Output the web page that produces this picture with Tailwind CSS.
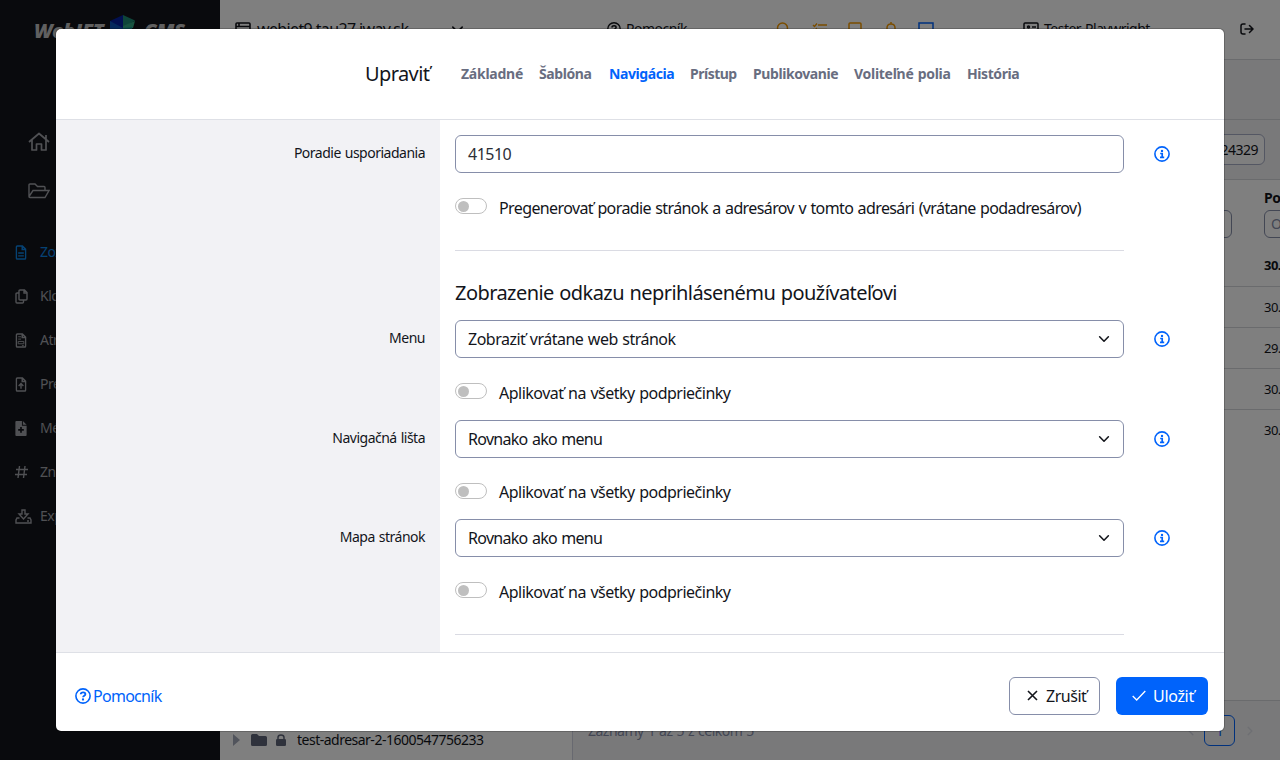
<!DOCTYPE html>
<html lang="sk">
<head>
<meta charset="utf-8">
<title>WebJET CMS</title>
<script src="https://cdn.jsdelivr.net/npm/@tailwindcss/browser@4"></script>
</head>
<body class="relative h-[760px] w-[1280px] overflow-hidden bg-white font-['Noto_Sans',sans-serif] text-[14px] tracking-[-0.036em] [word-spacing:0.06em] whitespace-nowrap text-[#13151b]">
<svg class="hidden">
  <symbol id="info" viewBox="0 0 16 16"><circle cx="8" cy="8" r="7.1" fill="none" stroke="currentColor" stroke-width="1.6"/><circle cx="8" cy="4.900" r="1.200" fill="currentColor"/><path d="M6.200 7.500h2v4M6 11.300h4.200" fill="none" stroke="currentColor" stroke-width="1.700"/></symbol>
  <symbol id="question" viewBox="0 0 16 16"><circle cx="8" cy="8" r="7.1" fill="none" stroke="currentColor" stroke-width="1.6"/><path d="M5.700 6.300c.2-2.600 4.700-2.600 4.700 0 0 1.500-2.300 1.600-2.300 3" fill="none" stroke="currentColor" stroke-width="1.800"/><circle cx="8" cy="11.500" r="1.150" fill="currentColor"/></symbol>
  <symbol id="chev" viewBox="0 0 16 16"><path d="m3 5.500 5 5 5-5" fill="none" stroke="currentColor" stroke-width="1.800" stroke-linecap="round" stroke-linejoin="round"/></symbol>
  <symbol id="file" viewBox="0 0 12 16"><path d="M1 2.200Q1 1 2.200 1H7.500L11 4.500v9.300q0 1.200-1.200 1.200H2.200Q1 15 1 13.800zM7.300 1v3.700H11" fill="none" stroke="currentColor" stroke-width="1.600"/></symbol>
</svg>

<div class="flex h-full">
  <aside class="flex w-[220px] shrink-0 flex-col bg-[#13151b] text-[#a0a2a8]">
    <div class="flex h-[117px] items-start pt-[14px] pl-[34px] text-[20px] leading-[33px] font-black text-[#c0c0c0] italic">
      <span class="w-[76px] tracking-[-0.02em]">WebJET</span>
      <svg class="h-7 w-[25px]" viewBox="0 0 25 28"><path d="M0 7 13 1v13L0 22z" fill="#0420a0"/><path d="m13 1 12 5.500L13 14z" fill="#1d8b73"/><path d="m25 7-2 7-10 1v-3z" fill="#31a882"/><path d="m0 7 13 7v13L0 21z" fill="#0b52b8"/><path d="m13 14 9-1v9l-9 5z" fill="#128f8d"/></svg>
      <span class="pl-[9px] tracking-[-0.02em]">CMS</span>
    </div>
    <div class="flex h-[49px] items-center pl-[28px]"><svg class="h-5 w-[22px]" viewBox="0 0 22 20" fill="none" stroke="currentColor" stroke-width="1.700" stroke-linejoin="round"><path d="m1 10 10-8.500L21 10M4 8v10h4.500v-6h5v6H18V8M18 7V3"/></svg></div>
    <div class="flex h-[48px] items-center pt-[2px] pl-[28px]"><svg class="h-4 w-[22px]" viewBox="0 0 22 16" fill="none" stroke="currentColor" stroke-width="1.400"><path d="M1 13V2q0-1 1-1h5l2.500 2.500H16q1 0 1 1V7M1 13.500 5 7.500h16l-4 7H2q-1 0-1-1z"/></svg></div>
    <nav class="flex flex-col pt-[16px] pl-[15px] [&>div]:flex [&>div]:h-[44px] [&>div]:items-center [&>div>span]:-mt-px">
      <div class="text-[#0b84e8]"><svg class="mr-[13px] h-[15px] w-3" viewBox="0 0 12 16"><use href="#file"/><path d="M3 8.500h6M3 11.500h6" stroke="currentColor" stroke-width="1.400"/></svg><span>Zoznam</span></div>
      <div><svg class="mr-3 h-[15px] w-[13px]" viewBox="0 0 13 15" fill="none" stroke="currentColor" stroke-width="1.400"><path d="M5 1h4.500L12 3.500V10q0 1-1 1H5q-1 0-1-1V2q0-1 1-1zM9 1v3h3M4 4H2Q1 4 1 5v8q0 1 1 1h5.500q1 0 1-1v-2"/></svg><span>Klonovanie</span></div>
      <div><svg class="mr-[13px] h-[15px] w-3" viewBox="0 0 12 16"><use href="#file"/><path d="M3 4h3M3 6.500h3M3 9h6v2.500H3zM7 13.500h2" fill="none" stroke="currentColor"/></svg><span>Atribúty</span></div>
      <div><svg class="mr-[13px] h-[15px] w-3" viewBox="0 0 12 16"><use href="#file"/><path d="M6 12.500V7.500M3.500 9.500 6 7l2.500 2.500" fill="none" stroke="currentColor" stroke-width="1.500"/></svg><span>Presmerovania</span></div>
      <div><svg class="mr-[13px] h-[15px] w-3" viewBox="0 0 12 16"><path d="M0 1q0-1 1-1h6v5h5v10q0 1-1 1H1q-1 0-1-1zM8 0l4 4H8z" fill="currentColor"/><path d="M6 6.500v6M3 9.500h6" stroke="#13151b" stroke-width="1.800"/></svg><span>Médiá</span></div>
      <div><svg class="mr-3 h-[14px] w-[13px]" viewBox="0 0 13 14"><path d="M4.500 1 3 13M10 1 8.500 13M1 4.500h12M0 9.500h12" fill="none" stroke="currentColor" stroke-width="1.400"/></svg><span>Značky</span></div>
      <div><svg class="mr-2 h-[15px] w-[17px]" viewBox="0 0 17 15" fill="none" stroke="currentColor" stroke-width="1.400"><path d="M7 1h3v4h3l-4.500 5L4 5h3zM4.500 9H2l-1 2v3h15v-3l-1-2h-2.500M12 12h2"/></svg><span>Export</span></div>
    </nav>
  </aside>

  <div class="flex w-[1060px] shrink-0 flex-col overflow-hidden">
    <header class="flex h-[60px] shrink-0 items-center border-b border-[#d5d6da] pb-[2px]">
      <svg class="ml-[15px] h-[14px] w-4" viewBox="0 0 16 14" fill="none" stroke="currentColor" stroke-width="1.600"><rect x="1" y="1" width="14" height="12" rx="1"/><path d="M1 4.500h14M4 1v3"/></svg>
      <span class="ml-[6px] w-[193px] pt-px text-[16px] tracking-[-0.04em]">webjet9.tau27.iway.sk</span>
      <svg class="mt-[3px] h-4 w-4"><use href="#chev" width="15" height="15"/></svg>
      <svg class="ml-[141px] h-[14px] w-[14px]"><use href="#question" width="14" height="14"/></svg>
      <span class="ml-[5px] w-[150px]">Pomocník</span>
      <div class="flex w-[247px] items-center text-[#f59a00]">
        <svg class="h-[14px] w-[14px]" viewBox="0 0 14 14" fill="none" stroke="currentColor" stroke-width="1.500"><circle cx="6.500" cy="6" r="5"/><path d="m10 10 4 4"/></svg>
        <svg class="ml-[22px] h-[14px] w-4" viewBox="0 0 16 14" fill="none" stroke="currentColor" stroke-width="1.400"><path d="m1 3 1.500 1.500L5 1.500M6 3h9M1 7l1.500 1.500L5 6M6 7.500h9M6 12h9"/></svg>
        <svg class="ml-5 h-[14px] w-[14px]" viewBox="0 0 14 14" fill="none" stroke="currentColor" stroke-width="1.500"><rect x="1" y="1" width="12" height="12" rx="1"/></svg>
        <svg class="ml-[23px] h-[14px] w-3" viewBox="0 0 12 14" fill="none" stroke="currentColor" stroke-width="1.500"><path d="M6 0v2M2 10V6q0-4 4-4t4 4v4l1 1H1z"/></svg>
        <svg class="ml-[21px] h-[14px] w-4 text-[#0063fb]" viewBox="0 0 16 14" fill="none" stroke="currentColor" stroke-width="1.500"><rect x="1" y="1" width="14" height="12"/></svg>
      </div>
      <svg class="h-[14px] w-4" viewBox="0 0 16 14" fill="none" stroke="currentColor" stroke-width="1.500"><rect x="1" y="1" width="14" height="12" rx="1"/><path d="M3.500 10q2-3 4 0M9 5h4M9 8h4"/><circle cx="5.500" cy="5" r="1"/></svg>
      <span class="ml-[5px] w-[196px]">Tester Playwright</span>
      <svg class="h-[12px] w-[14px]" viewBox="0 0 14 12" fill="none" stroke="currentColor" stroke-width="1.500" stroke-linecap="round"><path d="M5 1H3Q1 1 1 3v6q0 2 2 2h2M5 6h8M9.500 2.500 13 6 9.500 9.500"/></svg>
    </header>
    <div class="h-[60px] shrink-0 border-b border-[#d5d6da] bg-[#f3f3f5]"></div>
    <div class="flex grow">
      <div class="flex w-[353px] shrink-0 flex-col justify-end border-r border-[#d0d3e0] pb-[9px]">
        <div class="flex h-[22px] items-center pl-[13px] text-[#5f6579]">
          <svg class="h-[12px] w-[7px]" viewBox="0 0 7 12"><path d="M0 0 7 6 0 12z" fill="#a3a8b8"/></svg>
          <svg class="ml-[11px] h-3 w-4" viewBox="0 0 16 12"><path d="M0 1.500Q0 0 1.500 0H6l2 2h6.500Q16 2 16 3.500v7q0 1.500-1.500 1.500h-13Q0 12 0 10.500z" fill="currentColor"/></svg>
          <svg class="ml-[9px] h-3 w-[10px]" viewBox="0 0 10 12"><rect y="5" width="10" height="7" rx="1.300" fill="currentColor"/><path d="M2 6V3.500q0-2.500 3-2.500t3 2.500V6" fill="none" stroke="currentColor" stroke-width="1.500"/></svg>
          <span class="-mt-px ml-[11px] text-[#13151b]">test-adresar-2-1600547756233</span>
        </div>
      </div>
      <div class="flex w-[707px] shrink-0 flex-col overflow-hidden">
        <div class="flex h-[60px] shrink-0 justify-end border-b border-[#d5d6da] bg-[#f3f3f5] pt-[14px] pr-[15px]"><div class="flex h-[31px] w-[90px] items-center justify-end rounded-md border border-[#a9aec6] bg-white pr-[6px]">24329</div></div>
        <div class="flex justify-end">
          <div class="mt-[30px] mr-[32px] h-[28px] w-[90px] rounded-md border border-[#868ea9]"></div>
          <div class="w-[16px] pt-2"><b class="block h-[22px] leading-[19px]">Posledná zmena</b><div class="h-[28px] w-[100px] rounded-md border border-[#868ea9] pl-[6px] leading-[26px] text-[#868ea9]">Od</div></div>
        </div>
        <div class="mt-[7px] flex flex-col">
          <div class="h-[42px] border-b border-[#d5d6da] pl-[691px] text-[13px] leading-[41px] font-bold">30.08.2023</div>
          <div class="h-[41px] border-b border-[#d5d6da] pl-[691px] text-[13px] leading-[40px]">30.08.2023</div>
          <div class="h-[41px] border-b border-[#d5d6da] pl-[691px] text-[13px] leading-[40px]">29.08.2023</div>
          <div class="h-[41px] border-b border-[#d5d6da] pl-[691px] text-[13px] leading-[40px]">30.08.2023</div>
          <div class="h-[41px] pl-[691px] text-[13px] leading-[40px]">30.08.2023</div>
        </div>
        <div class="mt-auto flex h-[60px] items-center border-t border-[#d5d6da] bg-[#f3f3f5] pl-[15px] text-[#868ea9]">
          <span class="w-[597px]">Záznamy 1 až 5 z celkom 5</span>
          <svg class="h-3 w-3 rotate-90 text-[#d0d3e0]"><use href="#chev" width="12" height="12"/></svg>
          <span class="ml-[7px] flex h-[31px] w-[31px] shrink-0 items-center justify-center rounded-md border border-[#0063fb] text-[#0063fb]">1</span>
          <svg class="ml-[9px] h-3 w-3 -rotate-90 text-[#dcdee6]"><use href="#chev" width="12" height="12"/></svg>
        </div>
      </div>
    </div>
  </div>
</div>

<div class="absolute inset-0 bg-black/50"></div>

<div class="absolute top-[29px] left-[56px] flex h-[702px] w-[1168px] flex-col overflow-hidden rounded-[5px] bg-white shadow-[0_0_0_1px_rgba(0,0,0,0.2)]">
  <div class="flex h-[91px] shrink-0 items-center border-b border-[#dee0e6] pl-[309px]">
    <h5 class="w-[96px] text-[20px] tracking-[-0.03em]">Upraviť</h5>
    <nav class="-mt-[2px] flex text-[14px] font-bold tracking-[-0.03em] text-[#686d80]">
      <span class="w-[78px] tracking-[-0.018em]">Základné</span><span class="w-[70px]">Šablóna</span><span class="w-[81px] text-[#0063fb]">Navigácia</span><span class="w-[63px] tracking-[-0.036em]">Prístup</span><span class="w-[101px]">Publikovanie</span><span class="w-[113px] tracking-[-0.02em]">Voliteľné polia</span><span>História</span>
    </nav>
  </div>
  <div class="grid h-[532px] shrink-0 grid-cols-[384px_669px_76px] gap-x-[15px] overflow-hidden bg-[linear-gradient(to_right,#f2f2f5_384px,#fff_384px)] text-[16px]">
    <div class="flex flex-col items-end pr-[15px] text-[14px] leading-[20px]">
      <span class="mt-[23px]">Poradie usporiadania</span>
      <span class="mt-[165px]">Menu</span>
      <span class="mt-[80px]">Navigačná lišta</span>
      <span class="mt-[79px]">Mapa stránok</span>
    </div>
    <div class="flex flex-col pt-[15px]">
      <div class="flex h-[38px] items-center rounded-md border border-[#868ea9] px-[12px] text-[#2b2e36]">41510</div>
      <div class="mt-[25px] flex"><i class="flex h-4 w-8 items-center rounded-full border border-[#bfbfbf] pl-[2px]"><i class="size-[11px] rounded-full bg-[#bfbfbf]"></i></i><span class="ml-3 h-4 pt-[2px] leading-[16px] tracking-[-0.038em]">Pregenerovať poradie stránok a adresárov v tomto adresári (vrátane podadresárov)</span></div>
      <hr class="mt-[36px] border-[#dadbe3]">
      <h5 class="mt-[27px] h-[30px] text-[20px] leading-[30px] tracking-[-0.028em]">Zobrazenie odkazu neprihlásenému používateľovi</h5>
      <div class="mt-[12px] flex h-[38px] items-center justify-between rounded-md border border-[#868ea9] px-[12px]"><span>Zobraziť vrátane web stránok</span><svg class="size-[14px]"><use href="#chev" width="14" height="14"/></svg></div>
      <div class="mt-[25px] flex"><i class="flex h-4 w-8 items-center rounded-full border border-[#bfbfbf] pl-[2px]"><i class="size-[11px] rounded-full bg-[#bfbfbf]"></i></i><span class="ml-3 h-4 pt-[2px] leading-[16px]">Aplikovať na všetky podpriečinky</span></div>
      <div class="mt-[21px] flex h-[38px] items-center justify-between rounded-md border border-[#868ea9] px-[12px]"><span class="tracking-[-0.044em]">Rovnako ako menu</span><svg class="size-[14px]"><use href="#chev" width="14" height="14"/></svg></div>
      <div class="mt-[25px] flex"><i class="flex h-4 w-8 items-center rounded-full border border-[#bfbfbf] pl-[2px]"><i class="size-[11px] rounded-full bg-[#bfbfbf]"></i></i><span class="ml-3 h-4 pt-px leading-[16px]">Aplikovať na všetky podpriečinky</span></div>
      <div class="mt-[20px] flex h-[38px] items-center justify-between rounded-md border border-[#868ea9] px-[12px]"><span class="tracking-[-0.044em]">Rovnako ako menu</span><svg class="size-[14px]"><use href="#chev" width="14" height="14"/></svg></div>
      <div class="mt-[25px] flex"><i class="flex h-4 w-8 items-center rounded-full border border-[#bfbfbf] pl-[2px]"><i class="size-[11px] rounded-full bg-[#bfbfbf]"></i></i><span class="ml-3 h-4 pt-[2px] leading-[16px]">Aplikovať na všetky podpriečinky</span></div>
      <hr class="mt-[36px] border-[#dadbe3]">
    </div>
    <div class="flex flex-col pl-[15px] text-[#0063fb]">
      <svg class="mt-[26px] size-4"><use href="#info"/></svg>
      <svg class="mt-[169px] size-4"><use href="#info"/></svg>
      <svg class="mt-[84px] size-4"><use href="#info"/></svg>
      <svg class="mt-[83px] size-4"><use href="#info"/></svg>
    </div>
  </div>
  <div class="flex grow items-center border-t border-[#dee0e6] pt-[7px] pr-4 pb-0 pl-[19px] text-[16px]">
    <a class="flex items-center gap-[2px] tracking-[-0.045em] text-[#0063fb]"><svg class="size-4"><use href="#question"/></svg>Pomocník</a>
    <button class="ml-auto flex h-[38px] w-[91px] items-center rounded-md border border-[#868ea9] pl-[17px] tracking-[-0.03em]"><svg class="mr-2 size-[11px]" viewBox="0 0 11 11"><path d="m1 1 9 9M10 1l-9 9" stroke="currentColor" stroke-width="1.600"/></svg>Zrušiť</button>
    <button class="ml-4 flex h-[38px] w-[92px] items-center rounded-md bg-[#0063fb] pl-4 tracking-[-0.02em] text-white"><svg class="mr-[7px] h-[11px] w-[14px]" viewBox="0 0 14 11"><path d="m.7 6 4 4L13.300 1" fill="none" stroke="currentColor" stroke-width="1.300"/></svg>Uložiť</button>
  </div>
</div>
</body>
</html>
